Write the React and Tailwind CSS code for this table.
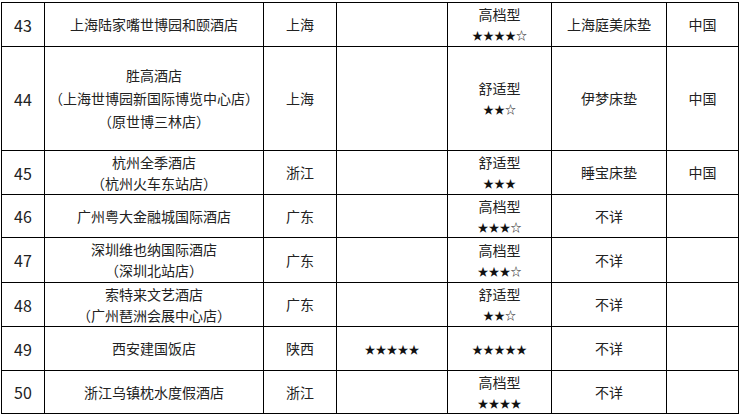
import React from "react";

const rows = [
  { n: "43", h: "h-[44px]", name: ["上海陆家嘴世博园和颐酒店"], prov: "上海", star: "", type: ["高档型", "★★★★☆"], bed: "上海庭美床垫", c: "中国" },
  { n: "44", h: "h-[104px]", name: ["胜高酒店", "（上海世博园新国际博览中心店）", "（原世博三林店）"], prov: "上海", star: "", type: ["舒适型", "★★☆"], bed: "伊梦床垫", c: "中国" },
  { n: "45", h: "h-[44px]", name: ["杭州全季酒店", "（杭州火车东站店）"], prov: "浙江", star: "", type: ["舒适型", "★★★"], bed: "睡宝床垫", c: "中国" },
  { n: "46", h: "h-[43px]", name: ["广州粤大金融城国际酒店"], prov: "广东", star: "", type: ["高档型", "★★★☆"], bed: "不详", c: "" },
  { n: "47", h: "h-[45px]", name: ["深圳维也纳国际酒店", "（深圳北站店）"], prov: "广东", star: "", type: ["高档型", "★★★☆"], bed: "不详", c: "" },
  { n: "48", h: "h-[44px]", name: ["索特来文艺酒店", "（广州琶洲会展中心店）"], prov: "广东", star: "", type: ["舒适型", "★★☆"], bed: "不详", c: "" },
  { n: "49", h: "h-[44px]", name: ["西安建国饭店"], prov: "陕西", star: "★★★★★", type: ["★★★★★"], bed: "不详", c: "" },
  { n: "50", h: "h-[43px]", name: ["浙江乌镇枕水度假酒店"], prov: "浙江", star: "", type: ["高档型", "★★★★"], bed: "不详", c: "" },
];

const isStar = (s) => /^[★☆]+$/.test(s);

function Line({ t, big }) {
  return isStar(t) ? (
    <div className="text-[11px] leading-[20px] text-[#111]">{t}</div>
  ) : (
    <div className={`text-[14px] ${big ? "leading-[23px]" : "leading-[21px]"}`}>{t}</div>
  );
}

export default function App() {
  const td = "border border-black text-center align-middle p-0";
  return (
    <div className="w-[739px] h-[416px] bg-white overflow-hidden" style={{ fontFamily: '"Noto Sans CJK SC", "Noto Sans", sans-serif' }}>
      <table className="table-fixed border-collapse w-[737px] ml-[1px] mt-[2px] text-[#222]">
        <colgroup>
          <col className="w-[43px]" />
          <col className="w-[219px]" />
          <col className="w-[73px]" />
          <col className="w-[111px]" />
          <col className="w-[104px]" />
          <col className="w-[115px]" />
          <col className="w-[72px]" />
        </colgroup>
        <tbody>
          {rows.map((r) => (
            <tr key={r.n} className={r.h}>
              <td className={`${td} text-[16px]`}>{r.n}</td>
              <td className={td}>
                {r.name.map((t, i) => (
                  <Line key={i} t={t} big={r.name.length === 3} />
                ))}
              </td>
              <td className={`${td} text-[14px]`}>{r.prov}</td>
              <td className={td}>{r.star && <Line t={r.star} />}</td>
              <td className={td}>
                {r.type.map((t, i) => (
                  <Line key={i} t={t} />
                ))}
              </td>
              <td className={`${td} text-[14px]`}>{r.bed}</td>
              <td className={`${td} text-[14px]`}>{r.c}</td>
            </tr>
          ))}
        </tbody>
      </table>
    </div>
  );
}
